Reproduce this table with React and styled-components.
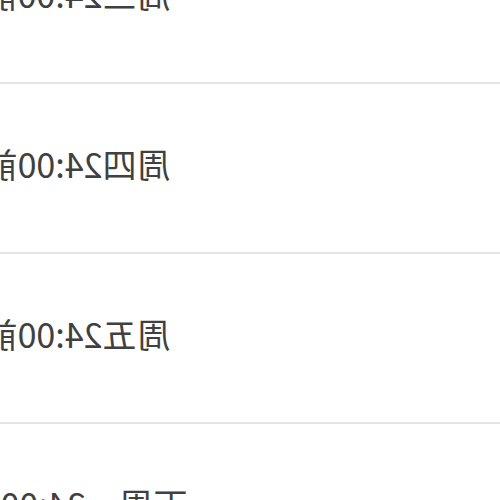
import styled, { createGlobalStyle } from "styled-components";

const GlobalStyle = createGlobalStyle`
  html, body {
    margin: 0;
    padding: 0;
    background: #ffffff;
  }
`;

// the shot is a mirrored, zoomed-in crop of a deadline list
const Viewport = styled.div`
  width: 500px;
  height: 500px;
  overflow: hidden;
  background: #ffffff;
  transform: scaleX(-1);
`;

const List = styled.ul`
  list-style: none;
  margin: -86px 0 0;
  padding: 0;
`;

const Row = styled.li`
  box-sizing: border-box;
  height: 170px;
  border-bottom: 2px solid #e3e3e3;
  display: flex;
  align-items: center;
  padding-bottom: 8px;
`;

const Deadline = styled.div`
  margin-left: 343px;
  width: 160px;
  display: flex;
  justify-content: center;
  white-space: nowrap;
  font-family: "Noto Sans CJK SC", "Noto Sans", sans-serif;
  font-size: 34px;
  line-height: 1;
  color: #404040;
`;

const deadlines = ["周三24:00前", "周四24:00前", "周五24:00前", "下周一24:00前"];

const App = () => {
  return (
    <>
      <GlobalStyle />
      <Viewport>
        <List>
          {deadlines.map((d) => (
            <Row key={d}>
              <Deadline>{d}</Deadline>
            </Row>
          ))}
        </List>
      </Viewport>
    </>
  );
};

export default App;
